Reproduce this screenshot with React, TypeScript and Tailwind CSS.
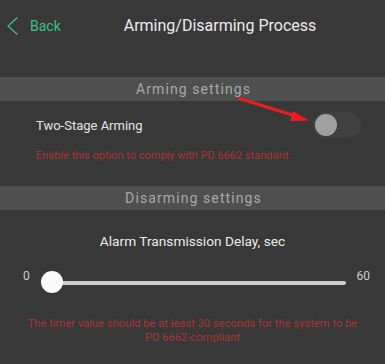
import React from "react";

export default function App() {
  const font = { fontFamily: "Roboto, 'Noto Sans', sans-serif" };
  return (
    <div
      className="relative w-[385px] h-[364px] bg-[#383838] overflow-hidden flex flex-col"
      style={font}
    >
      {/* Header */}
      <div className="flex items-center h-[50px] pt-[1px]">
        <div className="flex items-center pl-[7px] w-[60px] shrink-0">
          <svg width="11" height="18" viewBox="0 0 11 18" className="shrink-0">
            <path d="M10.5 0.5 L1 9 L10.5 17.5" fill="none" stroke="#3fc08c" strokeWidth="1.3" />
          </svg>
          <span className="ml-[12px] text-[14px] text-[#3fc08c] leading-none">Back</span>
        </div>
        <div className="flex-1 text-center pr-[5px] text-[16px] text-[#ececec] leading-none">
          Arming/Disarming Process
        </div>
      </div>

      <div className="h-[27px]" />

      {/* Arming settings bar */}
      <div className="h-[24px] bg-[#4f4f4f] flex items-center justify-center text-[14px] tracking-[1.1px] text-[#a9a9a9] leading-none pl-[2px]">
        Arming settings
      </div>

      <div className="flex items-center justify-between pl-[36px] pr-[24px] mt-[11px] h-[26px]">
        <span className="text-[13px] text-[#e4e4e4] leading-none">Two-Stage Arming</span>
        <div className="w-[48px] h-[26px] rounded-full bg-[#404040] flex items-center pl-[2px]">
          <div className="w-[22px] h-[22px] rounded-full bg-[#a0a0a0]" />
        </div>
      </div>

      <div className="pl-[36px] mt-[12px] text-[11px] text-[#a83434] leading-none">
        Enable this option to comply with PD 6662 standard.
      </div>

      <div className="h-[25px]" />

      {/* Disarming settings bar */}
      <div className="h-[24px] bg-[#4f4f4f] flex items-center justify-center text-[14px] tracking-[1.1px] text-[#a9a9a9] leading-none pl-[2px]">
        Disarming settings
      </div>

      <div className="mt-[25px] text-center text-[13.7px] text-[#ececec] leading-none">
        Alarm Transmission Delay, sec
      </div>

      {/* Slider */}
      <div className="flex items-start mt-[20px] pl-[23px] pr-[15px]">
        <span className="text-[12px] text-[#cfcfcf] leading-none w-[18px] pt-[1px]">0</span>
        <div className="flex-1 relative h-[24px] mt-[2px]">
          <div className="absolute left-[5px] right-[2px] top-[10px] h-[4px] bg-[#cdcdcd] rounded-full" />
          <div className="absolute left-0 top-0 w-[22px] h-[22px] rounded-full bg-[#fafafa]" />
        </div>
        <span className="text-[12px] text-[#cfcfcf] leading-none ml-[9px] pt-[1px]">60</span>
      </div>

      <div className="mt-[22px] text-center text-[11.2px] text-[#a83434] leading-[14px] px-[16px]">
        The timer value should be at least 30 seconds for the system to be
        <br />
        PD 6662-compliant
      </div>

      {/* Red annotation arrow */}
      <svg
        className="absolute left-0 top-0 pointer-events-none"
        width="385"
        height="364"
        viewBox="0 0 385 364"
      >
        <line x1="238" y1="98" x2="297" y2="116.5" stroke="#ee1c1c" strokeWidth="3" />
        <polygon points="309,120.5 293,111 290,121" fill="#ee1c1c" />
      </svg>
    </div>
  );
}
